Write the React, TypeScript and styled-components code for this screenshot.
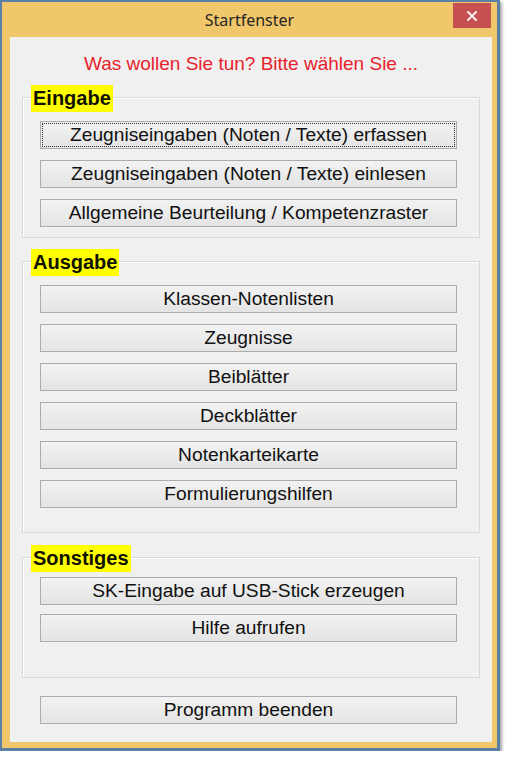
import React from "react";
import styled, { createGlobalStyle } from "styled-components";

const GlobalStyle = createGlobalStyle`
  html, body { margin: 0; padding: 0; background: #ffffff; }
  body { font-family: "Liberation Sans", Arial, sans-serif; }
  * { box-sizing: border-box; }
`;

const Window = styled.div`
  width: 500px;
  height: 751px;
  border-style: solid;
  border-color: #5a80a6;
  border-width: 2px 3px 3px 2px;
  background: #f0c86b;
  box-shadow: 2px 2px 3px rgba(0, 0, 0, 0.35);
  display: flex;
  flex-direction: column;
`;

const TitleBar = styled.div`
  height: 35px;
  flex-shrink: 0;
  display: grid;
  grid-template-columns: 1fr auto 1fr;
  align-items: start;
`;

const Title = styled.div`
  grid-column: 2;
  margin-top: 8px;
  font-family: "Noto Sans", "Open Sans", sans-serif;
  font-size: 16px;
  line-height: 21px;
  color: #262626;
`;

const CloseButton = styled.button`
  grid-column: 3;
  justify-self: end;
  margin: 1px 6px 0 0;
  width: 38px;
  height: 25px;
  border: none;
  padding: 0;
  background: #c75050;
  display: flex;
  align-items: center;
  justify-content: center;
`;

const Content = styled.div`
  flex: 1;
  margin: 0 5px 6px 8px;
  padding-top: 16px;
  background: #f0f0f0;
  display: flex;
  flex-direction: column;
`;

const Heading = styled.div`
  text-align: center;
  font-size: 19px;
  line-height: 22px;
  color: #e8222b;
`;

const Group = styled.div<{ $top: number; $padTop: number; $padBottom: number; $gap: number }>`
  position: relative;
  margin: ${(p) => p.$top}px 12px 0;
  border: 1px solid #d9d9d9;
  box-shadow: inset 1px 1px 0 #ffffff;
  padding: ${(p) => p.$padTop}px 0 ${(p) => p.$padBottom}px 17px;
  display: flex;
  flex-direction: column;
  gap: ${(p) => p.$gap}px;
`;

const Legend = styled.div`
  position: absolute;
  top: -13px;
  left: 8px;
  height: 27px;
  padding: 0 2px;
  background: #ffff00;
  font-size: 20px;
  font-weight: bold;
  line-height: 27px;
  color: #111100;
`;

const Button = styled.button<{ $focused?: boolean }>`
  appearance: none;
  width: 417px;
  height: 28px;
  margin: 0;
  padding: 0;
  border: 1px solid #acacac;
  background: linear-gradient(#f2f2f2, #e4e4e4);
  font-family: "Liberation Sans", Arial, sans-serif;
  font-size: 19.2px;
  line-height: 26px;
  color: #111111;
  text-align: center;
  outline: ${(p) => (p.$focused ? "1px dotted #333333" : "none")};
  outline-offset: -3px;
`;

const Footer = styled.div`
  margin-top: 18px;
  padding-left: 30px;
`;

type GroupDef = {
  title: string;
  top: number;
  padTop: number;
  padBottom: number;
  gap: number;
  buttons: string[];
};

const groups: GroupDef[] = [
  {
    title: "Eingabe",
    top: 22,
    padTop: 23,
    padBottom: 10,
    gap: 11,
    buttons: [
      "Zeugniseingaben (Noten / Texte) erfassen",
      "Zeugniseingaben (Noten / Texte) einlesen",
      "Allgemeine Beurteilung / Kompetenzraster",
    ],
  },
  {
    title: "Ausgabe",
    top: 23,
    padTop: 23,
    padBottom: 24,
    gap: 11,
    buttons: [
      "Klassen-Notenlisten",
      "Zeugnisse",
      "Beiblätter",
      "Deckblätter",
      "Notenkarteikarte",
      "Formulierungshilfen",
    ],
  },
  {
    title: "Sonstiges",
    top: 24,
    padTop: 19,
    padBottom: 35,
    gap: 9,
    buttons: ["SK-Eingabe auf USB-Stick erzeugen", "Hilfe aufrufen"],
  },
];

export default function App() {
  return (
    <>
      <GlobalStyle />
      <Window>
        <TitleBar>
          <Title>Startfenster</Title>
          <CloseButton aria-label="Schließen">
            <svg width="10" height="10" viewBox="0 0 10 10">
              <path d="M1 1 L9 9 M9 1 L1 9" stroke="#ffffff" strokeWidth="1.8" strokeLinecap="square" />
            </svg>
          </CloseButton>
        </TitleBar>
        <Content>
          <Heading>Was wollen Sie tun? Bitte wählen Sie ...</Heading>
          {groups.map((g, gi) => (
            <Group key={g.title} $top={g.top} $padTop={g.padTop} $padBottom={g.padBottom} $gap={g.gap}>
              <Legend>{g.title}</Legend>
              {g.buttons.map((b, bi) => (
                <Button key={b} $focused={gi === 0 && bi === 0}>
                  {b}
                </Button>
              ))}
            </Group>
          ))}
          <Footer>
            <Button>Programm beenden</Button>
          </Footer>
        </Content>
      </Window>
    </>
  );
}
